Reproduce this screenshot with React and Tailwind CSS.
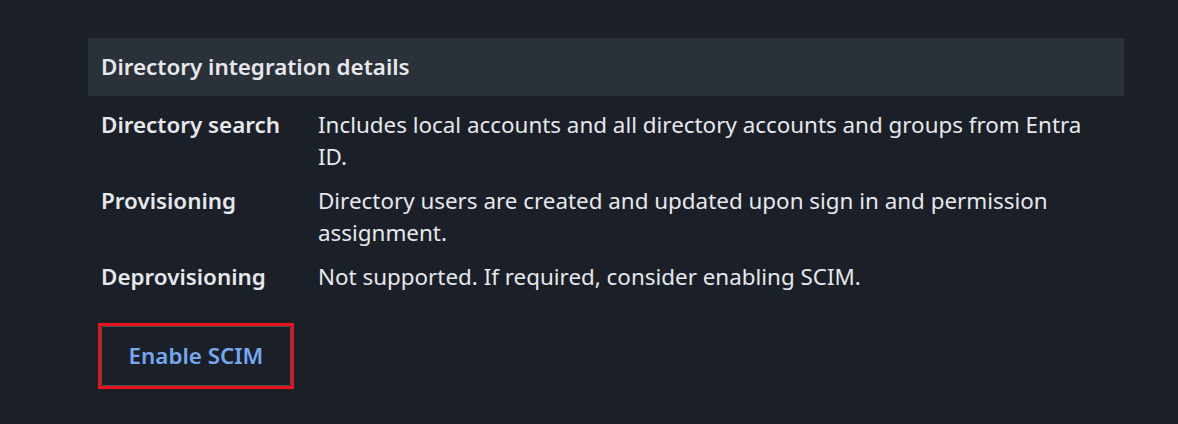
import React from "react";

const rows = [
  {
    label: "Directory search",
    value: "Includes local accounts and all directory accounts and groups from Entra ID.",
  },
  {
    label: "Provisioning",
    value: "Directory users are created and updated upon sign in and permission assignment.",
  },
  {
    label: "Deprovisioning",
    value: "Not supported. If required, consider enabling SCIM.",
  },
];

export default function App() {
  return (
    <div className="w-[1178px] h-[424px] bg-[#1b1f27] font-['Noto_Sans',sans-serif] pt-[38px] pl-[88px]">
      <div className="w-[1036px]">
        <div className="h-[58px] bg-[#2b3139] flex items-center px-[13px]">
          <h2 className="text-[22.4px] font-semibold text-[#e6e8eb]">Directory integration details</h2>
        </div>

        <div className="pt-[13px] pl-[13px] pr-[30px] flex flex-col gap-[12px]">
          {rows.map((r) => (
            <div key={r.label} className="flex text-[22.4px] leading-[32px]">
              <div className="w-[217px] shrink-0 font-semibold text-[#e6e8eb]">{r.label}</div>
              <div className="flex-1 text-[#e6e8eb]">{r.value}</div>
            </div>
          ))}
        </div>

        <div className="mt-[30px] ml-[10px] flex">
          <div className="border-[3px] border-[#e8131b]">
            <button className="w-[190px] h-[60px] flex items-center justify-center border border-[#4a5059] rounded-[2px] text-[22.4px] font-semibold text-[#75a8f0]">
              Enable SCIM
            </button>
          </div>
        </div>
      </div>
    </div>
  );
}
